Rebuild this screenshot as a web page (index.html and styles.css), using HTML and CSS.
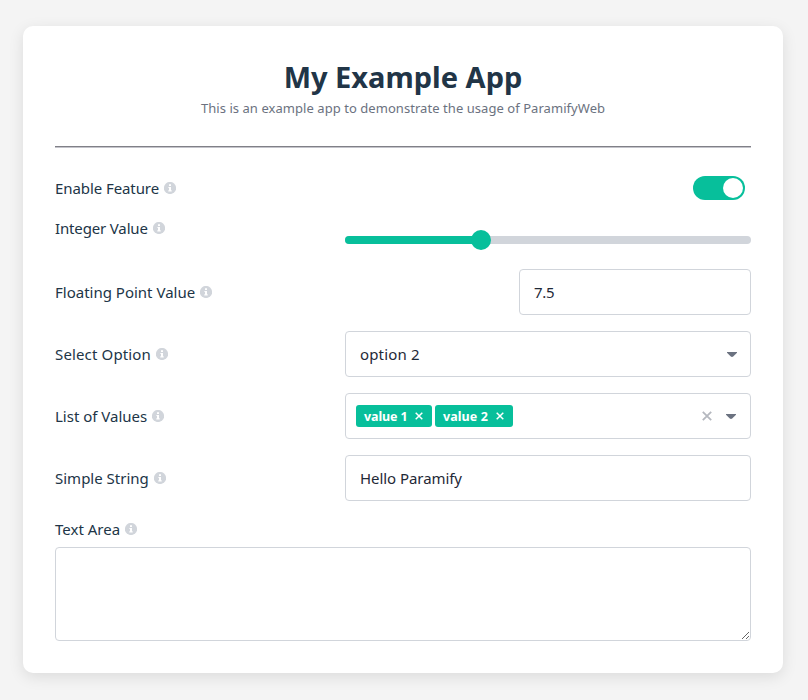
FILE: index.html
```html
<!DOCTYPE html>
<html lang="en">
<head>
<meta charset="utf-8">
<title>My Example App</title>
<link rel="stylesheet" href="styles.css">
</head>
<body>
<svg class="defs" width="0" height="0" aria-hidden="true">
  <symbol id="info" viewBox="0 0 12 12"><circle cx="6" cy="6" r="6.1" fill="#d1d5db"/><path d="M5 2.3h2v1.6H5zM4.4 4.9H7v3.4h.7v1.1H4.3V8.3H5V6h-.6z" fill="#fff"/></symbol>
  <symbol id="caret" viewBox="0 0 10 5"><path d="M0 0h10v.8L6.2 4.6Q5 5.4 3.8 4.6L0 .8z" fill="#6b7280"/></symbol>
</svg>
<main class="card">
  <header class="header">
    <h1 class="title">My Example App</h1>
    <p class="subtitle">This is an example app to demonstrate the usage of ParamifyWeb</p>
  </header>
  <form class="form">
    <div class="row row-toggle">
      <label class="label"><span class="name enable">Enable Feature</span><svg class="info"><use href="#info"/></svg></label>
      <span class="toggle"><span class="knob"></span></span>
    </div>
    <div class="row row-slider">
      <label class="label"><span class="name integer">Integer Value</span><svg class="info"><use href="#info"/></svg></label>
      <div class="slider"><span class="fill"></span><span class="thumb"></span></div>
    </div>
    <div class="row">
      <label class="label"><span class="name float">Floating Point Value</span><svg class="info"><use href="#info"/></svg></label>
      <div class="field number"><span class="value number-value">7.5</span></div>
    </div>
    <div class="row">
      <label class="label"><span class="name select">Select Option</span><svg class="info"><use href="#info"/></svg></label>
      <div class="field"><span class="value option">option 2</span><svg class="caret"><use href="#caret"/></svg></div>
    </div>
    <div class="row">
      <label class="label"><span class="name list">List of Values</span><svg class="info"><use href="#info"/></svg></label>
      <div class="field tags">
        <span class="tag"><span class="tag-text">value 1</span><svg class="remove" viewBox="0 0 8 8"><path d="M.7.7l6.6 6.6M7.3.7L.7 7.3"/></svg></span>
        <span class="tag tag-wide"><span class="tag-text">value 2</span><svg class="remove" viewBox="0 0 8 8"><path d="M.7.7l6.6 6.6M7.3.7L.7 7.3"/></svg></span>
        <svg class="clear" viewBox="0 0 10 10"><path d="M.8.8l8.4 8.4M9.2.8L.8 9.2"/></svg>
        <svg class="caret caret-tags"><use href="#caret"/></svg>
      </div>
    </div>
    <div class="row">
      <label class="label"><span class="name simple">Simple String</span><svg class="info"><use href="#info"/></svg></label>
      <div class="field"><span class="value hello">Hello Paramify</span></div>
    </div>
    <div class="area-group">
      <label class="label"><span class="name area">Text Area</span><svg class="info"><use href="#info"/></svg></label>
      <textarea class="textarea"></textarea>
    </div>
  </form>
</main>
</body>
</html>
```
FILE: styles.css
```css
* { box-sizing: border-box; }
body {
  margin: 0;
  height: 700px;
  padding: 26px 25px 0 23px;
  overflow: hidden;
  background: #f4f4f4;
  color: #213547;
  font-family: "Noto Sans", sans-serif;
  font-size: 15px;
}
.defs { position: absolute; }
.card {
  width: 760px;
  height: 647px;
  padding: 31px 32px 32px;
  border-radius: 10px;
  background: #fff;
  box-shadow: 0 4px 15px rgba(0, 0, 0, .1);
}
.header {
  height: 90px;
  display: flex;
  flex-direction: column;
  align-items: center;
  border-bottom: 1px solid #808087;
  box-shadow: 0 1px #c4c4cb;
}
.title { margin: 0; font-size: 29px; line-height: 40px; font-weight: 700; white-space: nowrap; }
.subtitle { margin: 0; padding-top: 1px; font-size: 13px; line-height: 20px; letter-spacing: .055px; color: #6b7280; white-space: nowrap; }
.form { display: flex; flex-direction: column; gap: 16px; padding-top: 28px; }
.row { height: 46px; display: flex; align-items: center; justify-content: space-between; }
.row-toggle { height: 26px; padding-right: 6px; }
.row-slider { height: 36px; align-items: flex-start; }
.row-slider .label { margin-top: -1px; }
.label { height: 24px; display: flex; align-items: center; gap: 5px; line-height: 24px; white-space: nowrap; }
.name { display: block; }
.enable { letter-spacing: -.08px; }
.integer { letter-spacing: -.15px; }
.select { letter-spacing: .14px; }
.info { display: block; width: 12px; height: 12px; }
.toggle { width: 52px; height: 24px; padding: 2px; display: flex; justify-content: flex-end; border-radius: 12px; background: #07bf9b; }
.knob { width: 20px; height: 20px; border-radius: 50%; background: #fff; }
.slider { width: 406px; height: 8px; margin-top: 19px; display: flex; align-items: center; border-radius: 4px; background: #d1d5db; }
.fill { width: 130px; height: 8px; border-radius: 4px 0 0 4px; background: #07bf9b; }
.thumb { width: 20px; height: 20px; margin-left: -4.5px; border-radius: 50%; background: #07bf9b; flex: none; }
.field { width: 406px; height: 46px; padding: 0 13px 0 14px; display: flex; align-items: center; border: 1px solid #d1d5db; border-radius: 4px; }
.number { width: 232px; }
.value { line-height: 24px; white-space: nowrap; color: #1f2937; }
.number-value { letter-spacing: -.3px; }
.option { letter-spacing: .15px; }
.hello { letter-spacing: -.06px; }
.caret { width: 10px; height: 5px; margin-left: auto; }
.tags { padding: 0 14px 0 10px; gap: 3px; }
.tag { width: 76px; height: 22px; padding: 0 9px 0 8px; display: flex; align-items: center; justify-content: space-between; border-radius: 3px; background: #07bf9b; color: #fff; font-size: 12.5px; font-weight: 700; white-space: nowrap; }
.tag-wide { width: 78px; }
.tag-wide .tag-text { letter-spacing: .08px; }
.tag:first-child .tag-text { letter-spacing: -.1px; }
.remove { width: 8px; height: 8px; fill: none; stroke: #fff; stroke-width: 1.5; }
.clear { width: 10px; height: 10px; margin-left: auto; fill: none; stroke: #b5b8bf; stroke-width: 1.8; }
.caret-tags { margin-left: 11px; }
.area-group .label { margin-bottom: 6px; }
.textarea { display: block; width: 696px; height: 94px; border: 1px solid #d1d5db; border-radius: 4px; background: #fff; resize: vertical; outline: none; }
```
